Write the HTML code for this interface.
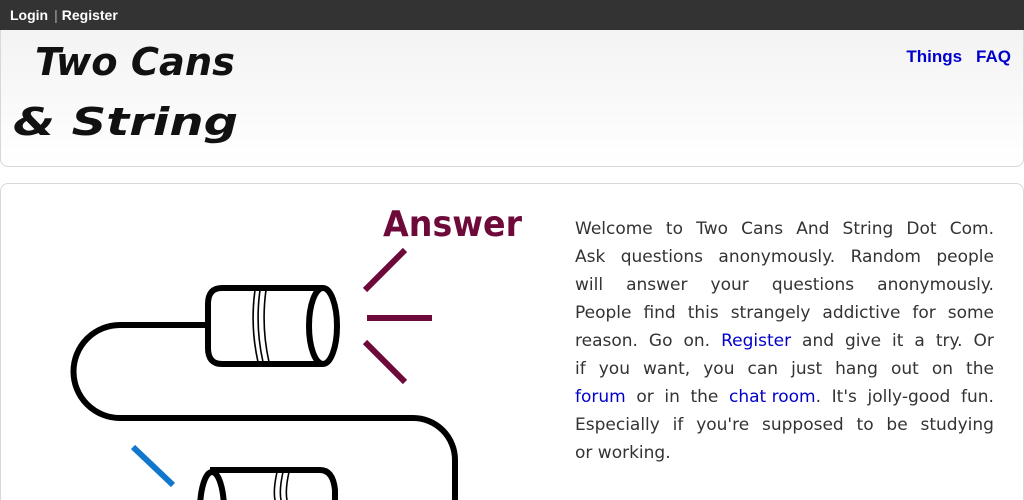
<!DOCTYPE html>
<html><head><meta charset="utf-8"><style>
*{margin:0;padding:0;box-sizing:border-box}
html,body{width:1024px;height:500px;overflow:hidden}
body{background:#fff;font-family:"Liberation Sans",sans-serif;position:relative}
#top{position:absolute;left:0;top:0;width:1024px;height:30px;background:#333;color:#fff;font-weight:bold;font-size:14px;line-height:30px;padding-left:10px}
#top .sep{color:#aaa;font-weight:normal;margin:0 4px 0 6px}
#hdr{position:absolute;left:0;top:30px;width:1024px;height:137px;border:1px solid #d8d8d8;border-top:none;border-radius:0 0 8px 8px;background:linear-gradient(#f3f3f3,#fff)}
#nav{position:absolute;right:12px;top:17px;font-size:17px;font-weight:bold;color:#0000cc}
#nav span{margin-left:14px}
#main{position:absolute;left:0;top:183px;width:1024px;height:317px;border:1px solid #d8d8d8;border-bottom:none;border-radius:8px 8px 0 0}
#txt{position:absolute;left:575px;top:215px;width:419px;font-family:"DejaVu Sans",sans-serif;font-size:17px;line-height:28px;color:#333}
#txt div{white-space:nowrap;display:flex;justify-content:space-between}
#txt div.last{display:block}
#txt a{color:#00c;text-decoration:none}
</style></head><body>
<div id="top">Login<span class="sep">|</span>Register</div>
<div id="hdr">
<svg style="position:absolute;left:0;top:0" width="300" height="135">
<text x="34" y="45" textLength="200" lengthAdjust="spacingAndGlyphs" font-family="DejaVu Sans" font-style="oblique" font-weight="bold" font-size="38" fill="#111">Two Cans</text>
<text x="12" y="105" textLength="225" lengthAdjust="spacingAndGlyphs" font-family="DejaVu Sans" font-style="oblique" font-weight="bold" font-size="38" fill="#111">&amp; String</text>
</svg>
<div id="nav"><span>Things</span><span>FAQ</span></div>
</div>
<div id="main"></div>
<svg style="position:absolute;left:0;top:0" width="1024" height="500">
<text x="383" y="236" textLength="139" lengthAdjust="spacingAndGlyphs" font-family="DejaVu Sans" font-weight="bold" font-size="36" fill="#6e0a3a">Answer</text>
<g stroke="#6e0a3a" stroke-width="6"><line x1="405" y1="250" x2="365" y2="290"/><line x1="367" y1="318" x2="432" y2="318"/><line x1="365" y1="342" x2="405" y2="382"/></g>
<line x1="133" y1="447" x2="173" y2="485" stroke="#1177cc" stroke-width="6"/>
<g fill="none" stroke="#000" stroke-width="6">
<path d="M207 325 H120 A46 46 0 0 0 120 418 H413 A42 42 0 0 1 455 460 V510"/>
<path d="M222 288 H323 M222 364 H323 M222 288 Q208 288 208 304 V348 Q208 364 222 364"/>
<ellipse cx="323" cy="326" rx="14" ry="38" fill="#fff"/>
<path d="M210 470 H320 Q333 470 335 490 V510"/>
<ellipse cx="212" cy="510" rx="12" ry="38"/>
</g>
<g fill="none" stroke="#000" stroke-width="1.6"><path d="M255 290 Q250 326 258 362 M260 290 Q255 326 263 362 M266 290 Q261 326 269 362"/><path d="M277 472 Q273 490 275 500 M283 472 Q279 490 281 500 M289 472 Q285 490 287 500"/></g>
</svg>
<div id="txt">
<div><span>Welcome</span><span>to</span><span>Two</span><span>Cans</span><span>And</span><span>String</span><span>Dot</span><span>Com.</span></div>
<div><span>Ask</span><span>questions</span><span>anonymously.</span><span>Random</span><span>people</span></div>
<div><span>will</span><span>answer</span><span>your</span><span>questions</span><span>anonymously.</span></div>
<div><span>People</span><span>find</span><span>this</span><span>strangely</span><span>addictive</span><span>for</span><span>some</span></div>
<div><span>reason.</span><span>Go</span><span>on.</span><span><a>Register</a></span><span>and</span><span>give</span><span>it</span><span>a</span><span>try.</span><span>Or</span></div>
<div><span>if</span><span>you</span><span>want,</span><span>you</span><span>can</span><span>just</span><span>hang</span><span>out</span><span>on</span><span>the</span></div>
<div><span><a>forum</a></span><span>or</span><span>in</span><span>the</span><span><a>chat room</a>.</span><span>It's</span><span>jolly-good</span><span>fun.</span></div>
<div><span>Especially</span><span>if</span><span>you're</span><span>supposed</span><span>to</span><span>be</span><span>studying</span></div>
<div class="last">or working.</div>
</div>
</body></html>
